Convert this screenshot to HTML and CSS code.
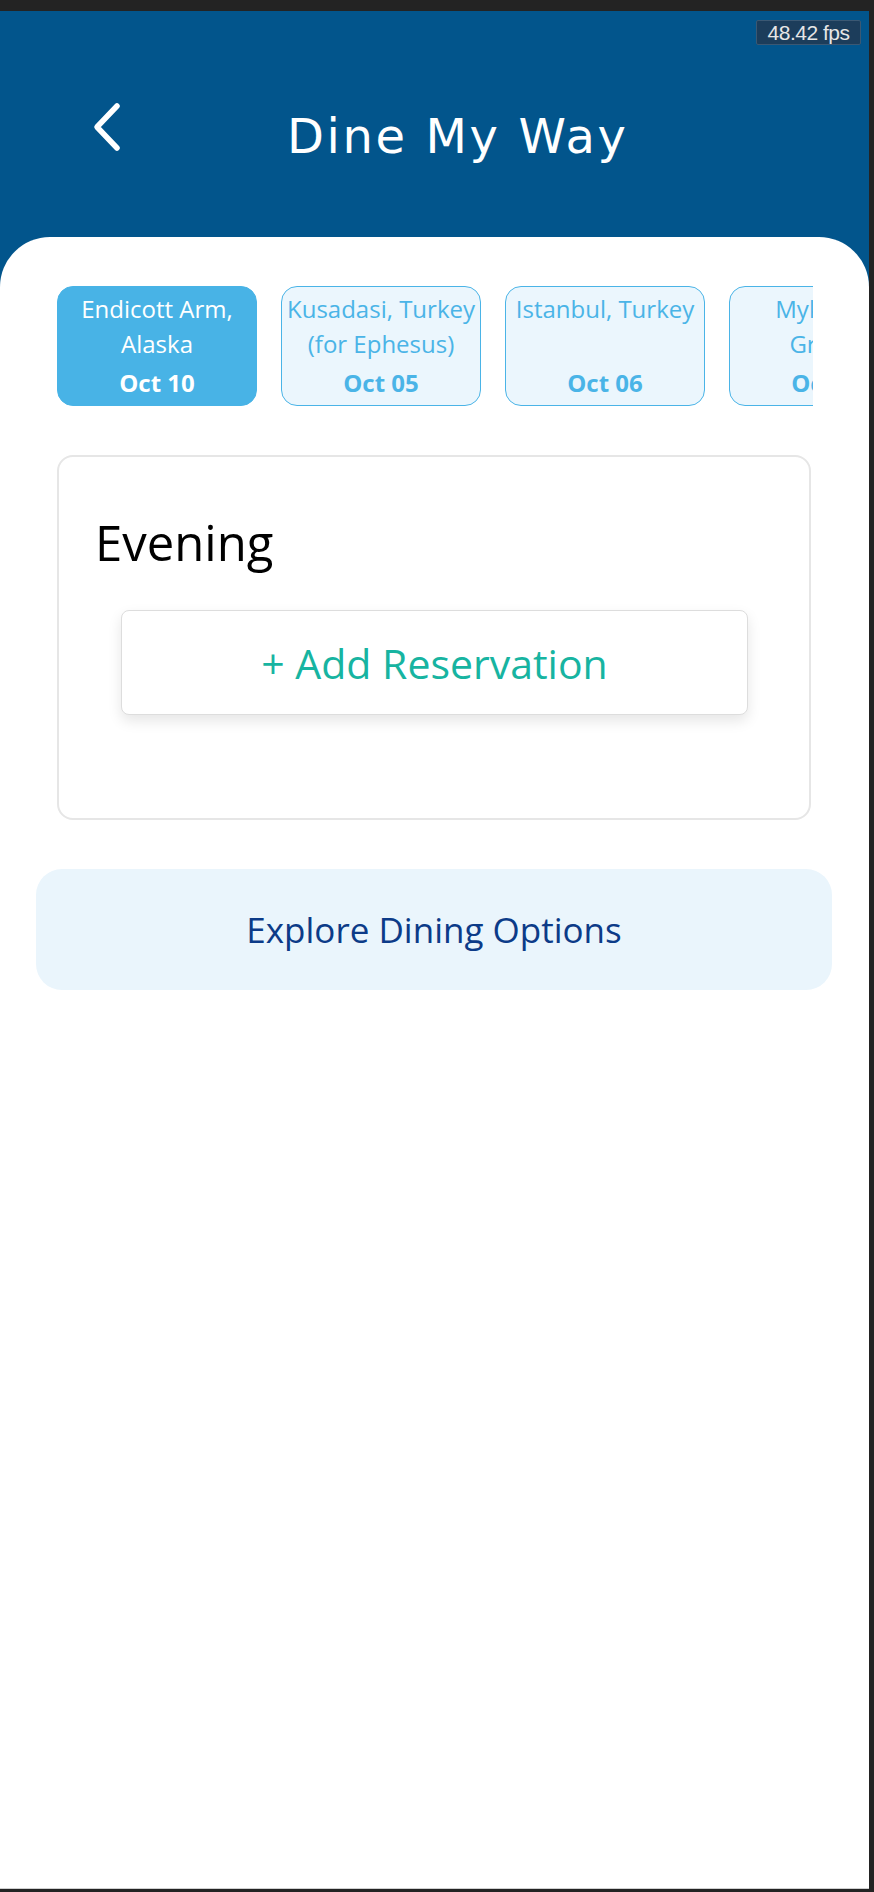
FILE: index.html
```html
<!DOCTYPE html>
<html>
<head>
<meta charset="utf-8">
<link rel="stylesheet" href="styles.css">
</head>
<body>
<div class="screen">
  <div class="fps">48.42 fps</div>
  <header class="header">
    <svg class="back" width="29" height="50" viewBox="0 0 29 50"><polyline points="25,4 5,25 25,46" fill="none" stroke="#fff" stroke-width="5.5" stroke-linecap="round" stroke-linejoin="round"/></svg>
    <h1 class="title">Dine My Way</h1>
  </header>
  <main class="panel">
    <div class="tabs">
      <div class="tab active"><span class="port">Endicott Arm, Alaska</span><span class="date">Oct 10</span></div>
      <div class="tab"><span class="port">Kusadasi, Turkey (for Ephesus)</span><span class="date">Oct 05</span></div>
      <div class="tab"><span class="port">Istanbul, Turkey</span><span class="date">Oct 06</span></div>
      <div class="tab"><span class="port">Mykonos,<br>Greece</span><span class="date">Oct 07</span></div>
    </div>
    <section class="card">
      <h2 class="card-title">Evening</h2>
      <button class="add-btn">+ Add Reservation</button>
    </section>
    <button class="explore">Explore Dining Options</button>
  </main>
</div>
</body>
</html>
```

FILE: styles.css
```css
html, body {
  margin: 0;
  padding: 0;
}
body {
  background: #232323;
  width: 874px;
  height: 1892px;
  overflow: hidden;
}
.screen {
  position: relative;
  width: 869px;
  height: 1877px;
  margin-top: 11px;
  background: #02558c;
  display: flex;
  flex-direction: column;
  border-bottom: 1px solid #cfcfcf;
}
.fps {
  position: absolute;
  top: 9px;
  right: 8px;
  width: 105px;
  height: 25px;
  box-sizing: border-box;
  background: #1c3d5b;
  border: 1px solid #3b5873;
  border-radius: 2px;
  color: #e6e6e6;
  font-family: "Liberation Sans", sans-serif;
  font-size: 21px;
  line-height: 24px;
  text-align: center;
  letter-spacing: -0.5px;
}
.header {
  height: 226px;
  box-sizing: border-box;
  padding: 91px 0 0 92px;
  display: flex;
  align-items: flex-start;
}
.back {
  display: block;
  flex: none;
}
.title {
  margin: 6px 0 0 166px;
  font-family: "DejaVu Sans", sans-serif;
  font-weight: normal;
  font-size: 48px;
  letter-spacing: 2.6px;
  color: #ffffff;
  line-height: normal;
}
.panel {
  flex: 1;
  background: #ffffff;
  border-radius: 50px 50px 0 0;
  padding-top: 49px;
  font-family: "Open Sans", sans-serif;
}
.tabs {
  display: flex;
  gap: 24px;
  margin: 0 56px 0 57px;
  overflow: hidden;
}
.tab {
  flex: none;
  width: 200px;
  height: 120px;
  box-sizing: border-box;
  border: 1px solid #4ab4e7;
  border-radius: 16px;
  background: #ebf6fd;
  color: #4ab4e7;
  display: flex;
  flex-direction: column;
  align-items: center;
  padding: 4px 0 5px;
  text-align: center;
  font-size: 24px;
  line-height: 35px;
}
.tab.active {
  background: #48b3e6;
  border-color: #48b3e6;
  color: #ffffff;
}
.port {
  display: block;
  white-space: normal;
}
.date {
  margin-top: auto;
  font-weight: bold;
}
.card {
  margin: 49px 58px 0 57px;
  border: 2px solid #e6e6e6;
  border-radius: 16px;
  padding: 52px 0 103px;
}
.card-title {
  margin: 0 0 35px 36px;
  font-size: 49px;
  font-weight: normal;
  color: #000000;
  line-height: normal;
}
.add-btn {
  display: flex;
  align-items: center;
  justify-content: center;
  margin-left: 62px;
  width: 627px;
  height: 105px;
  background: #ffffff;
  border: 1px solid #dddddd;
  border-radius: 8px;
  box-shadow: 0 6px 14px rgba(0, 0, 0, 0.10);
  font-family: "Open Sans", sans-serif;
  font-size: 41px;
  color: #17b4a1;
  padding: 0;
}
.explore {
  display: flex;
  align-items: center;
  justify-content: center;
  margin: 49px 0 0 36px;
  width: 796px;
  height: 121px;
  border: none;
  border-radius: 26px;
  background: #eaf5fc;
  font-family: "Open Sans", sans-serif;
  font-size: 35px;
  color: #0c3b88;
  padding: 0;
}
```
